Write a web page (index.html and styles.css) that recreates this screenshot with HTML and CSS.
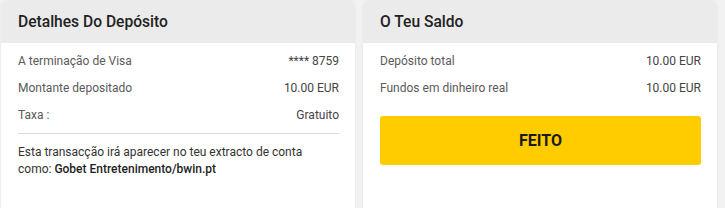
FILE: index.html
```html
<!DOCTYPE html>
<html lang="pt">
<head>
<meta charset="utf-8">
<link rel="stylesheet" href="styles.css">
</head>
<body>
<div class="page">
  <section class="card">
    <header class="card-head">Detalhes Do Depósito</header>
    <div class="card-body">
      <div class="row"><span class="label">A terminação de Visa</span><span class="value">**** 8759</span></div>
      <div class="row"><span class="label">Montante depositado</span><span class="value">10.00 EUR</span></div>
      <div class="row"><span class="label">Taxa :</span><span class="value">Gratuito</span></div>
      <hr class="sep">
      <p class="note">Esta transacção irá aparecer no teu extracto de conta<br>como: <strong>Gobet Entretenimento/bwin.pt</strong></p>
    </div>
  </section>
  <section class="card">
    <header class="card-head">O Teu Saldo</header>
    <div class="card-body">
      <div class="row"><span class="label">Depósito total</span><span class="value">10.00 EUR</span></div>
      <div class="row"><span class="label">Fundos em dinheiro real</span><span class="value">10.00 EUR</span></div>
      <button class="btn">FEITO</button>
    </div>
  </section>
</div>
</body>
</html>
```

FILE: styles.css
```css
html, body {
  margin: 0;
  padding: 0;
  background: #f2f2f2;
  font-family: Roboto, "Liberation Sans", Arial, sans-serif;
}
.page {
  display: flex;
  gap: 8px;
  padding-left: 1px;
  height: 208px;
  overflow: hidden;
}
.card {
  width: 354px;
  min-height: 230px;
  background: #fff;
  border-radius: 6px 6px 0 0;
  box-shadow: 0 0 2px rgba(0,0,0,0.08);
  overflow: hidden;
}
.card-head {
  height: 43px;
  box-sizing: border-box;
  padding: 1px 17px 0;
  display: flex;
  align-items: center;
  background: #ebebeb;
  color: #222;
  font-size: 15.6px;
  font-weight: 500;
}
.card-body {
  padding: 4px 16px 0 17px;
}
.row {
  height: 27px;
  display: flex;
  align-items: center;
  justify-content: space-between;
  font-size: 12px;
}
.label { color: #5a5a5a; }
.value { color: #444; }
.sep {
  margin: 5px 0 0 0;
  border: 0;
  border-top: 1px solid #dcdcdc;
  height: 0;
}
.note {
  margin: 10px 0 0 0;
  font-size: 12px;
  line-height: 17px;
  color: #333;
}
.note strong {
  font-weight: 500;
  color: #1e1e1e;
}
.btn {
  display: block;
  width: 100%;
  margin-top: 15px;
  height: 49px;
  border: 0;
  border-radius: 3px;
  background: #ffcc00;
  color: #1a1a1a;
  font-family: Roboto, "Liberation Sans", Arial, sans-serif;
  font-size: 16px;
  font-weight: 700;
  padding: 0;
}
```
